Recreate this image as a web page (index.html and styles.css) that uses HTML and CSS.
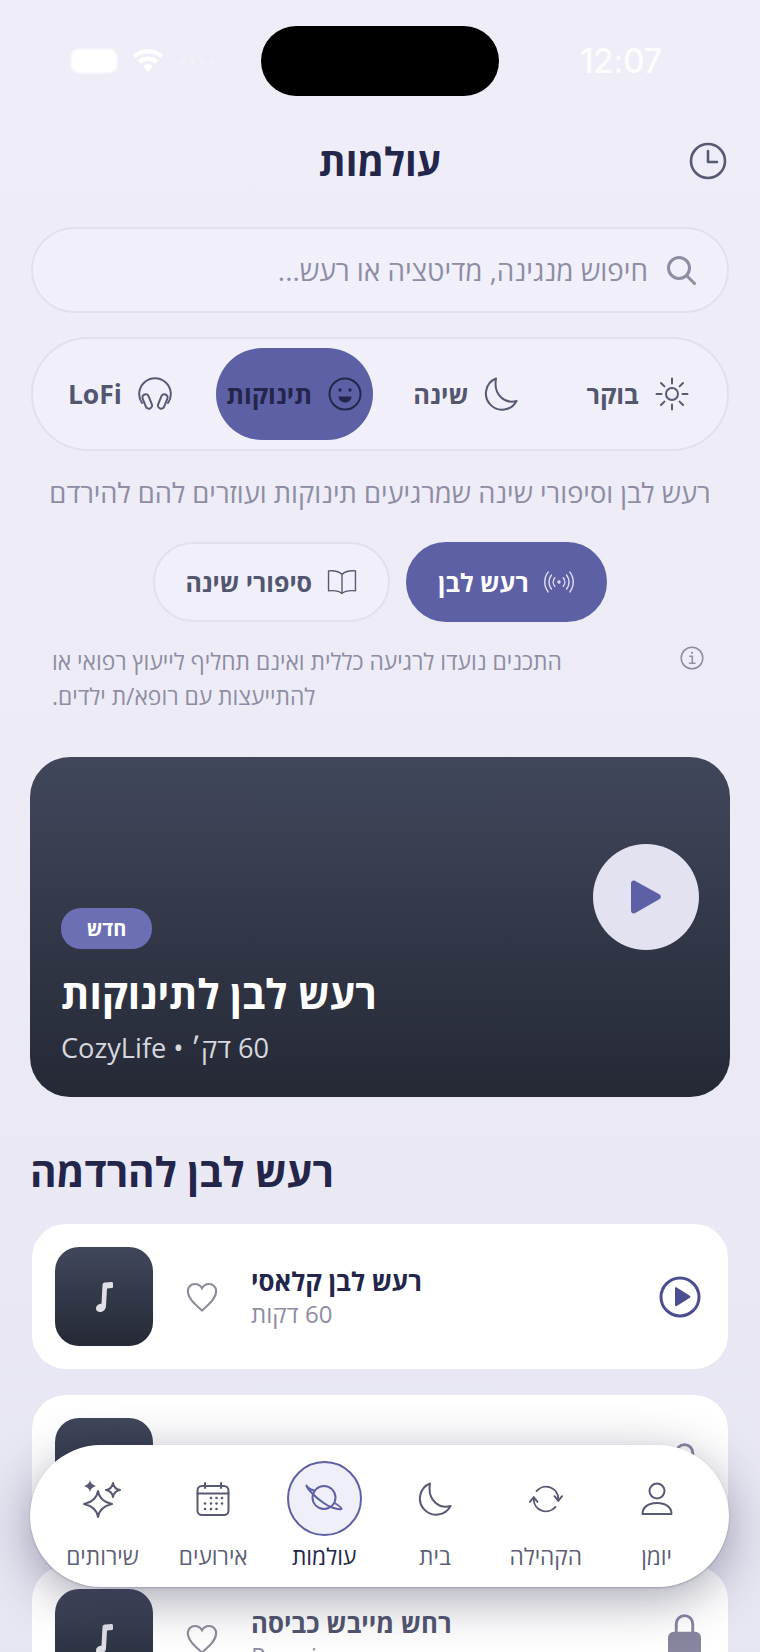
FILE: index.html
```html
<!DOCTYPE html>
<html lang="he" dir="rtl">
<head>
  <meta charset="UTF-8" />
  <title>עולמות</title>
  <link rel="stylesheet" href="styles.css">
</head>
<body>

  <svg class="defs" width="0" height="0" aria-hidden="true">
    <symbol id="moon" viewBox="0 0 34 34"><path d="M12 1.500A16.200 16.200 0 1 0 32.500 24C22 27 9 19 12 1.500z"/></symbol>
    <symbol id="heart" viewBox="0 0 24 24"><path d="M12 21.500C7 17 2 13 2 7.800 2 4.800 4.300 2.800 7 2.800c2 0 3.900 1 5 3 1.100-2 3-3 5-3 2.700 0 5 2 5 5 0 5.200-5 9.200-10 13.700z"/></symbol>
    <symbol id="music" viewBox="0 0 18 30"><path d="M7.500 3C7.500 1.500 8.500.7 10 .6L16.500 0c.9-.1 1.500.5 1.500 1.300v3.400c0 .8-.5 1.300-1.300 1.400l-4.700.5-1 17.400c-.2 3.400-2.700 6-5.800 6C2.500 30 1 28.500 1 26.500c0-2.800 2.800-4.700 5.500-4.700z"/></symbol>
  </svg>

  <div class="page">

    <div class="status-bar">
      <div class="status-time">12:07</div>
      <div class="island"></div>
      <div class="status-icons">
        <span class="signal"><i></i><i></i><i></i><i></i></span>
        <svg class="wifi" viewBox="0 0 30 24"><path d="M15 23l-5-6a7.500 7.500 0 0 1 10 0zM7.500 14.500L4.800 11.300a15.500 15.500 0 0 1 20.400 0l-2.700 3.200a11.500 11.500 0 0 0-15 0zM2.800 9L0 5.700a23 23 0 0 1 30 0L27.200 9a19 19 0 0 0-24.400 0z"/></svg>
        <span class="battery"></span>
      </div>
    </div>

    <header class="top">
      <svg class="icon clock" viewBox="0 0 38 38"><circle cx="19" cy="19" r="17"/><path d="M19 9v11h9"/></svg>
      <h1>עולמות</h1>
    </header>

    <div class="search">
      <svg class="icon search-icon" viewBox="0 0 30 30"><circle cx="13" cy="13" r="10.500"/><path d="M21 21l7.500 7.500"/></svg>
      <span>חיפוש מנגינה, מדיטציה או רעש...</span>
    </div>

    <div class="filters">
      <div class="filter">
        <svg class="icon" viewBox="0 0 34 34"><circle cx="17" cy="17" r="6"/><path d="M17 1.500v5M17 27.500v5M1.500 17h5M27.500 17h5M6 6l3.400 3.400M24.600 24.600L28 28M6 28l3.400-3.400M24.600 9.400L28 6"/></svg>
        <span>בוקר</span>
      </div>
      <div class="filter">
        <svg class="icon"><use href="#moon"/></svg>
        <span>שינה</span>
      </div>
      <div class="filter active">
        <svg class="icon" viewBox="0 0 34 34"><circle cx="17" cy="17" r="15.500"/><circle class="fill" cx="12" cy="13" r="1.700"/><circle class="fill" cx="22" cy="13" r="1.700"/><path class="fill" d="M10.500 19.500h13c0 3.500-2.900 6-6.500 6s-6.500-2.500-6.500-6z"/></svg>
        <span>תינוקות</span>
      </div>
      <div class="filter lofi">
        <svg class="icon" viewBox="0 0 34 34"><path d="M4 26A15.800 15.800 0 1 1 30 26"/><rect x="6" y="17" width="6.500" height="15" rx="3.200" transform="rotate(-22 9.200 24.500)"/><rect x="21.500" y="17" width="6.500" height="15" rx="3.200" transform="rotate(22 24.800 24.500)"/></svg>
        <span>LoFi</span>
      </div>
    </div>

    <p class="intro">רעש לבן וסיפורי שינה שמרגיעים תינוקות ועוזרים להם להירדם</p>

    <div class="tabs">
      <div class="tab active">
        <svg class="icon" viewBox="0 0 34 24"><circle class="fill" cx="17" cy="12" r="1.800"/><path d="M12.500 7.500a7 7 0 0 0 0 9M21.500 7.500a7 7 0 0 1 0 9M9 4.500a12 12 0 0 0 0 15M25 4.500a12 12 0 0 1 0 15M5.500 1.500a17 17 0 0 0 0 21M28.500 1.500a17 17 0 0 1 0 21"/></svg>
        <span>רעש לבן</span>
      </div>
      <div class="tab">
        <svg class="icon" viewBox="0 0 32 28"><path d="M16 6C13 2.500 7 1.500 1.500 2v21.500c5.500-.5 11.500 0 14.500 3 3-3 9-3.500 14.500-3V2C25 1.500 19 2.500 16 6zM16 6v20.500"/></svg>
        <span>סיפורי שינה</span>
      </div>
    </div>

    <div class="note">
      <svg class="icon" viewBox="0 0 24 24"><circle cx="12" cy="12" r="10.800"/><circle class="fill" cx="12" cy="6.800" r="1.100"/><path d="M9.800 10.200H12.300V17M9.500 17.300h5.500"/></svg>
      <p>התכנים נועדו לרגיעה כללית ואינם תחליף לייעוץ רפואי או להתייעצות עם רופא/ת ילדים.</p>
    </div>

    <section class="hero">
      <div class="hero-play">
        <svg viewBox="0 0 32 34"><path d="M1 3.500C1 1 3.300-.2 5.300 1l24 13.200c2 1.100 2 3.900 0 5L5.300 33c-2 1.200-4.300 0-4.300-2.500z"/></svg>
      </div>
      <div class="hero-text">
        <span class="badge">חדש</span>
        <h2>רעש לבן לתינוקות</h2>
        <div class="hero-meta">60 דק׳ • CozyLife</div>
      </div>
    </section>

    <h2 class="section-title">רעש לבן להרדמה</h2>

    <div class="track">
      <svg class="round-play" viewBox="0 0 42 42"><circle cx="21" cy="21" r="19"/><path class="fill" d="M16 12.500c0-1 1-1.500 1.800-1l13 8.200c.8.500.8 1.600 0 2.100l-13 8.200c-.8.500-1.800 0-1.800-1z"/></svg>
      <div class="track-text">
        <div class="track-title">רעש לבן קלאסי</div>
        <div class="track-sub">60 דקות</div>
      </div>
      <svg class="heart"><use href="#heart"/></svg>
      <div class="thumb"><svg class="music"><use href="#music"/></svg></div>
    </div>

    <div class="track locked">
      <svg class="lock" viewBox="0 0 34 48"><path class="shackle" d="M8.500 19V10a8.500 8.500 0 0 1 17 0v9"/><rect class="fill" x="0" y="18" width="34" height="30" rx="6"/></svg>
      <div class="track-text"></div>
      <div class="thumb"><svg class="music"><use href="#music"/></svg></div>
    </div>

    <div class="track locked">
      <svg class="lock" viewBox="0 0 34 48"><path class="shackle" d="M8.500 19V10a8.500 8.500 0 0 1 17 0v9"/><rect class="fill" x="0" y="18" width="34" height="30" rx="6"/></svg>
      <div class="track-text">
        <div class="track-title">רחש מייבש כביסה</div>
        <div class="track-sub">Premium</div>
      </div>
      <svg class="heart"><use href="#heart"/></svg>
      <div class="thumb"><svg class="music"><use href="#music"/></svg></div>
    </div>

    <nav class="tabbar">
      <div class="nav-item">
        <div class="nav-icon"><svg class="icon" viewBox="0 0 34 34"><circle cx="17" cy="9" r="7.500"/><path d="M2.500 32c0-7 6-11 14.500-11s14.500 4 14.500 11z"/></svg></div>
        <span>יומן</span>
      </div>
      <div class="nav-item">
        <div class="nav-icon"><svg class="icon" viewBox="0 0 36 34"><path d="M8 8.600A13 13 0 0 1 31 17M28 25.400A13 13 0 0 1 5 17"/><path d="M27 14l4 5 4-5M1 20l4-5 4 5"/></svg></div>
        <span>הקהילה</span>
      </div>
      <div class="nav-item">
        <div class="nav-icon"><svg class="icon"><use href="#moon"/></svg></div>
        <span>בית</span>
      </div>
      <div class="nav-item active">
        <div class="nav-icon"><svg class="icon" viewBox="0 0 40 34"><circle cx="20" cy="15.500" r="11.500"/><path d="M10 8.500C5.500 7 2 4.500 2.500 3.500 3 6.500 10 14 19 20.500 25 25 33 28 37.500 27 38 25.500 34 23 30.500 21"/></svg></div>
        <span>עולמות</span>
      </div>
      <div class="nav-item">
        <div class="nav-icon"><svg class="icon" viewBox="0 0 34 34">
          <rect x="1.500" y="4" width="31" height="29" rx="4.500"/><path d="M1.500 11.500h31M9 1v5M25 1v5"/>
          <g class="fill"><circle cx="15" cy="16" r="1.300"/><circle cx="20.500" cy="16" r="1.300"/><circle cx="26" cy="16" r="1.300"/><circle cx="9" cy="21.500" r="1.300"/><circle cx="15" cy="21.500" r="1.300"/><circle cx="20.500" cy="21.500" r="1.300"/><circle cx="26" cy="21.500" r="1.300"/><circle cx="9" cy="27" r="1.300"/><circle cx="15" cy="27" r="1.300"/><circle cx="20.500" cy="27" r="1.300"/></g>
        </svg></div>
        <span>אירועים</span>
      </div>
      <div class="nav-item">
        <div class="nav-icon"><svg class="icon sparkles" viewBox="0 0 38 38"><path d="M15 11C16 18 20 22 29 24 20 26 16 30 15 37 14 30 10 26 1 24 10 22 14 18 15 11zM30 3C30.700 7 33 9.300 37 10 33 10.700 30.700 13 30 17 29.300 13 27 10.700 23 10 27 9.300 29.300 7 30 3z"/><path class="fill" d="M7 0C7.600 3.200 9.500 5 13 6 9.500 7 7.600 8.800 7 12 6.400 8.800 4.500 7 1 6 4.500 5 6.400 3.200 7 0z"/></svg></div>
        <span>שירותים</span>
      </div>
    </nav>

  </div>

</body>
</html>
```

FILE: styles.css
```css
* {
  margin: 0;
  padding: 0;
  box-sizing: border-box;
  font-family: "Open Sans", "Liberation Sans", sans-serif;
}

body {
  background: #ecebf6;
  color: #23264a;
}

.defs {
  position: absolute;
}

.page {
  position: relative;
  height: 1652px;
  padding: 26px 30px 0;
  overflow: hidden;
  background: linear-gradient(#eeedf8, #ecebf6 50%, #e6e6f2);
}

.icon {
  fill: none;
  stroke: #575a73;
  stroke-width: 2;
  stroke-linecap: round;
  stroke-linejoin: round;
}

.icon .fill {
  fill: #575a73;
  stroke: none;
}

/* status bar */
.status-bar {
  display: grid;
  grid-template-columns: 1fr 238px 1fr;
  align-items: center;
  height: 70px;
}

.island {
  height: 70px;
  background: #000;
  border-radius: 35px;
}

.status-time {
  padding-right: 68px;
  font-family: Inter, sans-serif;
  font-size: 33.500px;
  font-weight: 500;
  letter-spacing: -0.5px;
  color: rgba(255, 255, 255, 0.85);
}

.status-icons {
  display: flex;
  align-items: center;
  padding-left: 42px;
  direction: ltr;
  flex-direction: row-reverse;
  justify-content: flex-end;
  gap: 17px;
}

.battery {
  width: 44px;
  height: 22px;
  background: #fff;
  border-radius: 7px;
  box-shadow: 0 0 0 2px rgba(255, 255, 255, 0.5);
}

.wifi {
  width: 30px;
  height: 24px;
  fill: #fff;
}

.signal {
  display: flex;
  gap: 5px;
}

.signal i {
  width: 5px;
  height: 5px;
  border-radius: 50%;
  background: rgba(255, 255, 255, 0.25);
}

/* header */
.top {
  position: relative;
  display: flex;
  justify-content: center;
  align-items: center;
  height: 78px;
  margin-top: 26px;
}

.top h1 {
  font-size: 38.500px;
  font-weight: 700;
}

.clock {
  position: absolute;
  right: 3px;
  top: 20px;
  width: 38px;
  height: 38px;
  stroke-width: 2.600;
}

/* search */
.search {
  display: flex;
  align-items: center;
  gap: 18px;
  height: 86px;
  margin: 27px 1px 0;
  padding-right: 31px;
  background: #f1f0fa;
  border: 2px solid #e1e0eb;
  border-radius: 43px;
  font-size: 27.800px;
  color: #8d8da3;
}

.search-icon {
  width: 30px;
  height: 30px;
  stroke: #8d8da3;
  stroke-width: 3;
}

/* filters */
.filters {
  display: grid;
  grid-template-columns: repeat(4, 1fr);
  gap: 15px;
  height: 114px;
  margin: 24px 1px 0;
  padding: 9px 11px;
  background: #f1f0fa;
  border: 2px solid #e1e0eb;
  border-radius: 57px;
}

.filter {
  display: flex;
  justify-content: center;
  align-items: center;
  gap: 16px;
  border-radius: 46px;
  font-size: 25.500px;
  font-weight: 700;
  color: #53566f;
}

.filter.lofi {
  padding-right: 5px;
  font-size: 26.500px;
}

.filter .icon {
  width: 34px;
  height: 34px;
}

.filter.active {
  background: #5e60a6;
  color: #23264a;
}

.filter.active .icon {
  stroke: #23264a;
}

.filter.active .fill {
  fill: #23264a;
}

.intro {
  margin-top: 24px;
  font-size: 27.300px;
  line-height: 36px;
  text-align: center;
  color: #8d8da3;
}

/* tabs */
.tabs {
  display: flex;
  justify-content: center;
  gap: 16px;
  margin-top: 31px;
}

.tab {
  display: flex;
  align-items: center;
  justify-content: center;
  gap: 14px;
  height: 80px;
  padding: 0 30px;
  background: #f1f0fa;
  border: 2px solid #e1e0eb;
  border-radius: 40px;
  font-size: 25px;
  font-weight: 700;
  color: #53566f;
}

.tab .icon {
  width: 32px;
  height: 26px;
  stroke-width: 1.500;
}

.tab.active {
  background: #5e60a6;
  border-color: #5e60a6;
  color: #fff;
}

.tab.active .icon {
  stroke: #dfe0f3;
}

.tab.active .fill {
  fill: #dfe0f3;
}

/* note */
.note {
  display: flex;
  justify-content: space-between;
  align-items: flex-start;
  margin-top: 22px;
  padding: 0 26px 0 22px;
}

.note .icon {
  width: 24px;
  height: 24px;
  margin-top: 2px;
  stroke: #8d8da3;
  stroke-width: 1.500;
}

.note .icon .fill {
  fill: #8d8da3;
}

.note p {
  width: 512px;
  font-size: 22.800px;
  line-height: 35px;
  text-align: left;
  color: #8d8da3;
}

/* hero */
.hero {
  display: flex;
  justify-content: space-between;
  height: 340px;
  margin-top: 43px;
  padding: 87px 31px 0;
  background: linear-gradient(#41475b, #252936);
  border-radius: 40px;
}

.hero-play {
  display: flex;
  justify-content: center;
  align-items: center;
  width: 106px;
  height: 106px;
  background: #e3e2f0;
  border-radius: 50%;
}

.hero-play svg {
  width: 32px;
  height: 34px;
  fill: #5e60a6;
}

.hero-text {
  display: flex;
  flex-direction: column;
  align-items: flex-end;
  padding-top: 64px;
}

.badge {
  display: flex;
  justify-content: center;
  align-items: center;
  width: 91px;
  height: 41px;
  background: #6d6fb5;
  border-radius: 20px;
  font-size: 20px;
  font-weight: 700;
  color: #fff;
}

.hero-text h2 {
  margin-top: 19px;
  font-size: 40.500px;
  line-height: 52px;
  font-weight: 700;
  color: #fff;
}

.hero-meta {
  margin-top: 11px;
  font-size: 27.200px;
  line-height: 34px;
  color: #d6d7df;
}

.section-title {
  margin-top: 51px;
  font-size: 40.500px;
  line-height: 48px;
  font-weight: 700;
  text-align: left;
}

/* track cards */
.track {
  display: flex;
  align-items: center;
  gap: 32px;
  height: 145px;
  margin: 28px 2px 0;
  padding: 0 27px 0 23px;
  background: #fff;
  border-radius: 34px;
}

.track + .track {
  margin-top: 26px;
}

.round-play {
  width: 42px;
  height: 42px;
  margin-left: auto;
  fill: none;
  stroke: #4c4e90;
  stroke-width: 3;
}

.round-play .fill {
  fill: #4c4e90;
  stroke: none;
}

.track-text {
  text-align: left;
}

.track-title {
  font-size: 25.800px;
  line-height: 34px;
  font-weight: 700;
  color: #23264a;
}

.track-sub {
  font-size: 24px;
  line-height: 32px;
  color: #8d8da3;
}

.heart {
  width: 34px;
  height: 34px;
  fill: none;
  stroke: #8c8c9c;
  stroke-width: 1.500;
}

.thumb {
  display: flex;
  justify-content: center;
  align-items: center;
  width: 98px;
  height: 99px;
  background: linear-gradient(#41475b, #252936);
  border-radius: 24px;
}

.music {
  width: 18px;
  height: 30px;
  fill: #dfdfe6;
}

.locked .track-title {
  color: #53566f;
}

.lock {
  width: 33px;
  height: 47px;
  margin-left: auto;
  align-self: flex-start;
  margin-top: 48px;
  fill: none;
}

.lock .fill {
  fill: #8686a0;
}

.lock .shackle {
  stroke: #8686a0;
  stroke-width: 3;
}

/* bottom nav */
.tabbar {
  position: absolute;
  left: 30px;
  right: 31px;
  top: 1445px;
  display: grid;
  grid-template-columns: repeat(6, 1fr);
  height: 142px;
  padding: 16px 17px 0;
  background: #fff;
  border-radius: 71px;
  box-shadow: 0 1px 2px rgba(40, 40, 75, 0.25), 0 12px 50px rgba(40, 40, 75, 0.42);
}

.nav-item {
  display: flex;
  flex-direction: column;
  align-items: center;
  font-size: 22.700px;
  line-height: 30px;
  color: #5d5f76;
}

.nav-icon {
  display: flex;
  justify-content: center;
  align-items: center;
  width: 75px;
  height: 75px;
  margin-bottom: 6px;
  border-radius: 50%;
}

.nav-icon .icon {
  width: 34px;
  height: 34px;
}

.nav-item .sparkles {
  width: 38px;
  height: 38px;
}

.nav-item.active {
  color: #23264a;
  font-weight: 500;
}

.nav-item.active .nav-icon {
  background: #efeff9;
  border: 2px solid #5e60a6;
}

.nav-item.active .icon {
  width: 40px;
  stroke: #5e60a6;
}
```
